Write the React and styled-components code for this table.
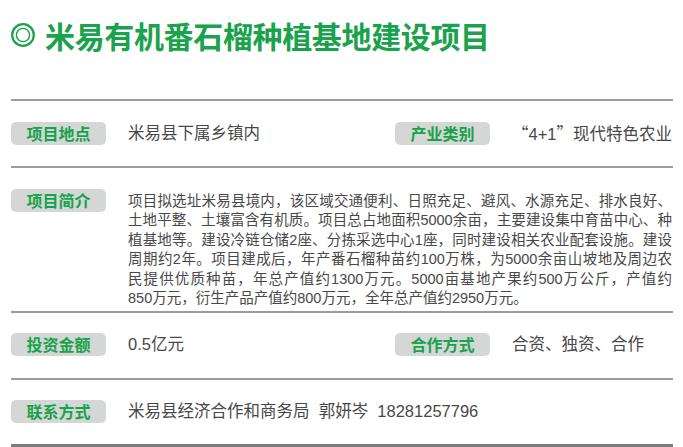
import React from 'react'
import styled, { createGlobalStyle } from 'styled-components'

const Global = createGlobalStyle`
body {
    margin: 0;
    background: #fff;
    font-family: "Liberation Sans", "Noto Sans CJK SC", sans-serif;
}
`

const Page = styled.div`
width: 683px;
height: 447px;
box-sizing: border-box;
padding: 0 10px 0 11px;
overflow: hidden;
`

const Header = styled.header`
height: 101px;
box-sizing: border-box;
padding-top: 20px;
display: flex;
align-items: flex-start;
gap: 10px;
border-bottom: 2px solid #9c9c9c;
`

const Title = styled.h1`
margin: 0;
font-size: 30px;
line-height: 30px;
font-weight: 700;
letter-spacing: -0.35px;
color: #1ba24c;
font-family: "Noto Sans CJK SC", sans-serif;
`

const Row = styled.section`
height: ${p => p.h}px;
box-sizing: border-box;
padding-top: ${p => p.top || 21}px;
display: flex;
align-items: flex-start;
border-bottom: ${p => p.last ? '3px solid #7c7c7c' : '2px solid #9c9c9c'};
`

const Field = styled.div`
display: flex;
align-items: flex-start;
gap: 22px;
width: ${p => p.w ? p.w + 'px' : 'auto'};
flex: ${p => p.w ? 'none' : '1'};
min-width: 0;
`

const Badge = styled.span`
flex: none;
width: 95px;
height: 23px;
border-radius: 5px;
background: #d5d6d6;
color: #16a34a;
font-family: "Noto Sans CJK SC", sans-serif;
font-weight: 700;
font-size: 16px;
line-height: 23px;
text-align: center;
`

const Value = styled.span`
font-size: 16.5px;
line-height: 23px;
color: #484848;
white-space: pre;
`

const Quote = styled.span`
font-family: "Noto Sans CJK SC", sans-serif;
`

const Para = styled.div`
margin-top: 3px;
width: 544px;
font-size: 14.5px;
line-height: 19.4px;
color: #484848;
`

const Line = styled.div`
text-align: justify;
text-align-last: ${p => p.last ? 'left' : 'justify'};
white-space: nowrap;
`

function Ring() {
    return (
        <svg width="24" height="26" viewBox="0 0 24 26" style={{ flex: 'none', marginTop: 2 }}>
            <circle cx="12" cy="13" r="10.8" fill="none" stroke="#1ba24c" strokeWidth="2.2" />
            <circle cx="12" cy="13" r="6.6" fill="none" stroke="#1ba24c" strokeWidth="1.4" />
        </svg>
    )
}

const intro = [
    '项目拟选址米易县境内，该区域交通便利、日照充足、避风、水源充足、排水良好、',
    '土地平整、土壤富含有机质。项目总占地面积5000余亩，主要建设集中育苗中心、种',
    '植基地等。建设冷链仓储2座、分拣采选中心1座，同时建设相关农业配套设施。建设',
    '周期约2年。项目建成后，年产番石榴种苗约100万株，为5000余亩山坡地及周边农',
    '民提供优质种苗，年总产值约1300万元。5000亩基地产果约500万公斤，产值约',
    '850万元，衍生产品产值约800万元，全年总产值约2950万元。',
]

export default function App() {
    return (
        <Page>
            <Global />
            <Header>
                <Ring />
                <Title>米易有机番石榴种植基地建设项目</Title>
            </Header>
            <Row h={67}>
                <Field w={384}>
                    <Badge>项目地点</Badge>
                    <Value>米易县下属乡镇内</Value>
                </Field>
                <Field>
                    <Badge>产业类别</Badge>
                    <Value><Quote>“</Quote>4+1<Quote>”</Quote>现代特色农业</Value>
                </Field>
            </Row>
            <Row h={145}>
                <Field>
                    <Badge>项目简介</Badge>
                    <Para>
                        {intro.map((t, i) => (
                            <Line key={i} last={i === intro.length - 1}>{t}</Line>
                        ))}
                    </Para>
                </Field>
            </Row>
            <Row h={67} top={20}>
                <Field w={384}>
                    <Badge>投资金额</Badge>
                    <Value>0.5亿元</Value>
                </Field>
                <Field>
                    <Badge>合作方式</Badge>
                    <Value>合资、独资、合作</Value>
                </Field>
            </Row>
            <Row h={67} top={20} last>
                <Field>
                    <Badge>联系方式</Badge>
                    <Value>米易县经济合作和商务局  郭妍岑  18281257796</Value>
                </Field>
            </Row>
        </Page>
    )
}
